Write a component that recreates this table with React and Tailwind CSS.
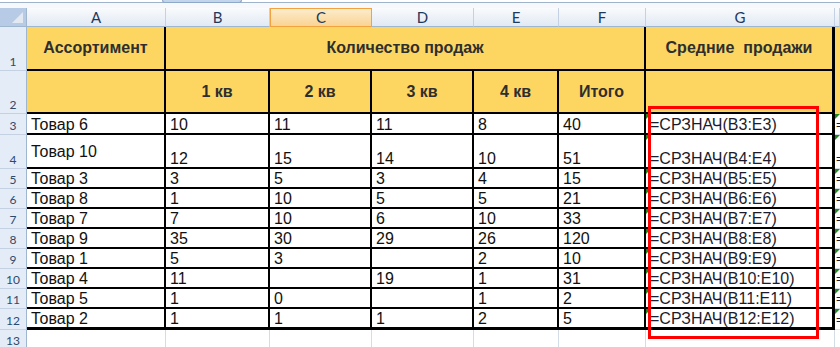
const FONT = "font-['Liberation_Sans',Arial,sans-serif]";

const products = [
  { n: 3, name: "Товар 6", q: ["10", "11", "11", "8"], total: "40" },
  { n: 4, name: "Товар 10", q: ["12", "15", "14", "10"], total: "51", tall: true },
  { n: 5, name: "Товар 3", q: ["3", "5", "3", "4"], total: "15" },
  { n: 6, name: "Товар 8", q: ["1", "10", "5", "5"], total: "21" },
  { n: 7, name: "Товар 7", q: ["7", "10", "6", "10"], total: "33" },
  { n: 8, name: "Товар 9", q: ["35", "30", "29", "26"], total: "120" },
  { n: 9, name: "Товар 1", q: ["5", "3", "", "2"], total: "10" },
  { n: 10, name: "Товар 4", q: ["11", "", "19", "1"], total: "31" },
  { n: 11, name: "Товар 5", q: ["1", "0", "", "1"], total: "2" },
  { n: 12, name: "Товар 2", q: ["1", "1", "1", "2"], total: "5" },
];

const letters = ["A", "B", "C", "D", "E", "F", "G"];

function RowNum({ n }) {
  return (
    <div className="flex items-end justify-center border-r border-b border-r-[#9eb6ce] border-b-[#c3d1e2] bg-[#e4ecf7] pb-[2px] font-['Lato',sans-serif] text-[12px] leading-none text-[#2c4a6c]">
      {n}
    </div>
  );
}

function ColHead({ label, active }) {
  return (
    <div
      className={
        active
          ? "flex items-center justify-center border border-[#f2a33f] bg-linear-to-b from-[#fdeccb] to-[#f9d393] font-['Lato',sans-serif] text-[15px] text-[#1e395b]"
          : "flex items-center justify-center border-r border-b border-r-[#c3d1e2] border-b-[#9eb6ce] bg-linear-to-b from-[#f9fbfd] to-[#e1e9f3] font-['Lato',sans-serif] text-[15px] text-[#1e395b]"
      }
    >
      {label}
    </div>
  );
}

function Flag() {
  return (
    <span className="absolute left-0 top-0 h-0 w-0 border-t-[5px] border-r-[5px] border-t-[#1e8a1e] border-r-transparent" />
  );
}

export default function App() {
  return (
    <div className={`relative h-[347px] w-[840px] overflow-hidden bg-white ${FONT}`}>
      {/* ribbon edge */}
      <div className="relative h-[8px] bg-[#f6f8fb]">
        <div className="absolute left-0 right-0 top-0 h-[2px] bg-white" />
        <div className="absolute left-0 right-0 top-[2px] h-[1px] bg-[#9fb3ca]" />
        <div className="absolute left-[162px] top-0 h-[3px] w-[80px] rounded-b-[3px] border border-t-0 border-[#8ea8c8] bg-[#c3d5ea]" />
      </div>

      <div className="grid grid-cols-[27px_139px_104px_102px_102px_85px_87px_189px_1fr] grid-rows-[19px_44px_43px_21px_34px_repeat(7,20px)_21px_20px]">
        {/* column headers */}
        <div className="relative border-r border-b border-[#9eb6ce] bg-[#b7cbe6]">
          <svg className="absolute bottom-[3px] right-[3px]" width="11" height="11" viewBox="0 0 11 11">
            <path d="M11 0 L11 11 L0 11 Z" fill="#e3e9f1" />
          </svg>
        </div>
        {letters.map((l) => (
          <ColHead key={l} label={l} active={l === "C"} />
        ))}
        <ColHead label="" />

        {/* row 1 */}
        <RowNum n={1} />
        <div className="flex items-center justify-center border-r-2 border-b-2 border-black bg-[#fdd662] text-[16px] font-bold text-[#2e2e2e]">
          Ассортимент
        </div>
        <div className="col-span-5 flex items-center justify-center border-r-2 border-b-2 border-black bg-[#fdd662] text-[16px] font-bold text-[#2e2e2e]">
          Количество продаж
        </div>
        <div className="flex items-center justify-center whitespace-pre border-r-[3px] border-b-2 border-black bg-[#fdd662] text-[16px] font-bold text-[#2e2e2e]">
          {"Средние  продажи"}
        </div>
        <div className="bg-[#fdd662]" />

        {/* row 2 */}
        <RowNum n={2} />
        <div className="border-r-2 border-b-2 border-black bg-[#fdd662]" />
        {["1 кв", "2 кв", "3 кв", "4 кв", "Итого"].map((t) => (
          <div
            key={t}
            className="flex items-center justify-center border-r-2 border-b-2 border-black bg-[#fdd662] text-[16px] font-bold text-[#2e2e2e]"
          >
            {t}
          </div>
        ))}
        <div className="border-r-[3px] border-b-2 border-black bg-[#fdd662]" />
        <div className="bg-[#fdd662]" />

        {/* data rows */}
        {products.map((p, i) => {
          const last = i === products.length - 1;
          const b = last ? "border-b-[3px]" : "border-b-2";
          const cell = `flex items-end overflow-hidden whitespace-nowrap border-r-2 ${b} border-black pl-[4px] text-[16px] leading-[17px] text-[#111]`;
          return [
            <RowNum key={`n${p.n}`} n={p.n} />,
            <div
              key={`a${p.n}`}
              className={`flex ${p.tall ? "items-center" : "items-end"} overflow-hidden whitespace-nowrap border-r-2 ${b} border-black pl-[4px] text-[16px] leading-[17px] text-[#111]`}
            >
              {p.name}
            </div>,
            ...p.q.map((v, k) => (
              <div key={`q${p.n}-${k}`} className={cell}>
                {v}
              </div>
            )),
            <div key={`t${p.n}`} className={cell}>
              {p.total}
            </div>,
            <div
              key={`g${p.n}`}
              className={`relative flex items-end overflow-hidden whitespace-nowrap border-r-[3px] ${b} border-black pl-[4px] text-[16px] leading-[17px] text-[#1b1b2b]`}
            >
              <Flag />
              {`=СРЗНАЧ(B${p.n}:E${p.n})`}
            </div>,
            <div
              key={`h${p.n}`}
              className="relative flex items-end overflow-hidden whitespace-nowrap border-b border-[#d4dce6] pl-[1px] text-[12px] leading-[17px] text-[#1b1b2b]"
            >
              <Flag />
              =
            </div>,
          ];
        })}

        {/* row 13 */}
        <RowNum n={13} />
        {letters.map((l) => (
          <div key={`e${l}`} className="border-r border-[#d4dce6]" />
        ))}
        <div />
      </div>

      {/* highlight frame around the averages */}
      <div className="pointer-events-none absolute left-[648px] top-[106px] h-[233px] w-[171px] border-[3px] border-[#ff0000]" />
    </div>
  );
}
